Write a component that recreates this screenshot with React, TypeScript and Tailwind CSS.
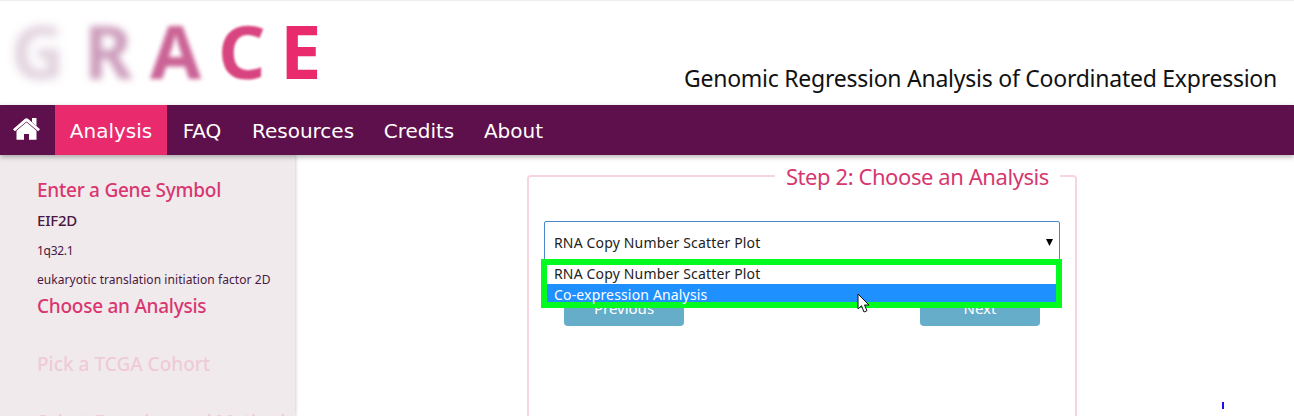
import React from "react";

const logo = [
  { char: "G", style: "left-[11px] text-[#d3bccd] blur-[5px] opacity-70" },
  { char: "R", style: "left-[84px] text-[#cd9dbc] blur-[3.5px]" },
  { char: "A", style: "left-[150px] text-[#cb6496] blur-[2.2px]" },
  { char: "C", style: "left-[218px] text-[#d8447f] blur-[0.9px]" },
  { char: "E", style: "left-[280px] text-[#e92a6c]" },
];

const nav = [
  { label: "Analysis", style: "w-28 bg-[#e92a6c]" },
  { label: "FAQ", style: "w-[70px]" },
  { label: "Resources", style: "w-[132px]" },
  { label: "Credits", style: "w-[100px]" },
  { label: "About", style: "w-[89px]" },
];

function Header() {
  return (
    <header className="flex h-[105px] items-start justify-between border-t border-[#eeeeee]">
      <div className="relative h-[100px] w-[340px]" aria-label="GRACE">
        {logo.map((l) => (
          <span
            key={l.char}
            className={`absolute top-[5px] font-['Noto_Sans',sans-serif] text-[74px] leading-[90px] font-bold ${l.style}`}
          >
            {l.char}
          </span>
        ))}
      </div>
      <h1 className="mt-[61px] mr-[17px] text-[23px] leading-8 tracking-[-0.25px] whitespace-nowrap text-[#111]">
        Genomic Regression Analysis of Coordinated Expression
      </h1>
    </header>
  );
}

function Nav() {
  return (
    <nav className="relative z-10 flex h-[50px] bg-[#5e104c] font-['DejaVu_Sans',sans-serif] text-[20px] text-white shadow-[0_2px_5px_rgba(0,0,0,0.3)]">
      <a className="flex w-[55px] justify-center pt-[13px] pr-[3px]">
        <svg width="27" height="22" viewBox="0 0 27 22" fill="#fff">
          <path d="M19 0h4.500v8l-4.500-4z" />
          <path d="M0 11.200 12 .8q1.500-1.200 3 0L27 11.200 25.200 13.200 13.500 3.400 1.800 13.200z" />
          <path d="M13.500 4.300 23.500 12.800v9h-7.500V16h-5v5.800H3.500v-9z" />
        </svg>
      </a>
      {nav.map((n) => (
        <a key={n.label} className={`flex items-center justify-center pt-px whitespace-nowrap ${n.style}`}>
          {n.label}
        </a>
      ))}
    </nav>
  );
}

function Sidebar() {
  return (
    <aside className="flex w-[295px] shrink-0 flex-col overflow-hidden bg-[#f0eaec] pt-5 pl-[37px] whitespace-nowrap shadow-[1px_0_3px_rgba(0,0,0,0.18)]">
      <h2 className="text-[19px] leading-[30px] font-medium tracking-[-0.26px] text-[#d93670]">Enter a Gene Symbol</h2>
      <p className="text-[15px] leading-[31px] font-medium tracking-[-0.2px] text-[#4a1740]">EIF2D</p>
      <p className="text-xs leading-[29px] tracking-[-0.3px] text-[#4a1740]">1q32.1</p>
      <p className="text-xs leading-[29px] tracking-[0.06px] text-[#4a1740]">eukaryotic translation initiation factor 2D</p>
      <h2 className="mt-[-3px] text-[19px] leading-[30px] font-medium tracking-[-0.26px] text-[#d93670]">
        Choose an Analysis
      </h2>
      <h2 className="mt-7 text-[19px] leading-[30px] font-medium text-[#efcbd7]">Pick a TCGA Cohort</h2>
      <h2 className="mt-7 text-[19px] leading-[30px] font-medium tracking-[-0.28px] text-[#efcbd7]">
        Select Experimental Method
      </h2>
    </aside>
  );
}

function Step() {
  return (
    <fieldset className="mt-[2px] ml-[232px] h-[300px] w-[550px] rounded border-2 border-[#f7d5df] px-[15px]">
      <legend className="ml-auto px-[11px] text-[22px] leading-[38px] tracking-[-0.42px] whitespace-nowrap text-[#d5386f]">
        Step 2: Choose an Analysis
      </legend>
      <div className="relative mt-[26px] h-[41px] rounded-xs border border-[#4a87cd] px-[9px] text-sm leading-[42px] tracking-[0.16px] text-[#222]">
        <div className="flex justify-between">
          <span>RNA Copy Number Scatter Plot</span>
          <svg className="mt-[17px] mr-[-3px]" width="7" height="7" viewBox="0 0 7 7">
            <path d="M0 0h7L3.500 7z" fill="#000" />
          </svg>
        </div>
        <ul className="absolute top-[37px] left-[-4px] w-[521px] border-[6px] border-[#04fb20] bg-white leading-[20px]">
          <li className="h-[19px] pl-[7px] leading-[18px]">RNA Copy Number Scatter Plot</li>
          <li className="h-[18px] bg-[#1e90ff] pl-[7px] leading-[21px] text-white">Co-expression Analysis</li>
        </ul>
        <svg className="absolute top-[71px] left-[312px]" width="13" height="21" viewBox="0 0 13 21">
          <path d="M1 1v15l3.500-3.300L7 19l3-1.300L7.500 12H12z" fill="#fff" stroke="#111" />
        </svg>
      </div>
      <div className="mt-[27px] flex justify-between px-5 text-center text-[15px] leading-[34px] text-white">
        <button className="h-[37px] w-[120px] rounded bg-[#65adc9]">Previous</button>
        <button className="h-[37px] w-[120px] rounded bg-[#65adc9]">Next</button>
      </div>
    </fieldset>
  );
}

export default function App() {
  return (
    <div className="relative h-[416px] w-[1294px] overflow-hidden bg-white font-['Noto_Sans',sans-serif]">
      <Header />
      <Nav />
      <main className="flex h-[261px]">
        <Sidebar />
        <Step />
      </main>
      <span className="absolute top-[402px] left-[1222px] h-[7px] w-[2px] bg-[#1a10f0]" />
    </div>
  );
}
